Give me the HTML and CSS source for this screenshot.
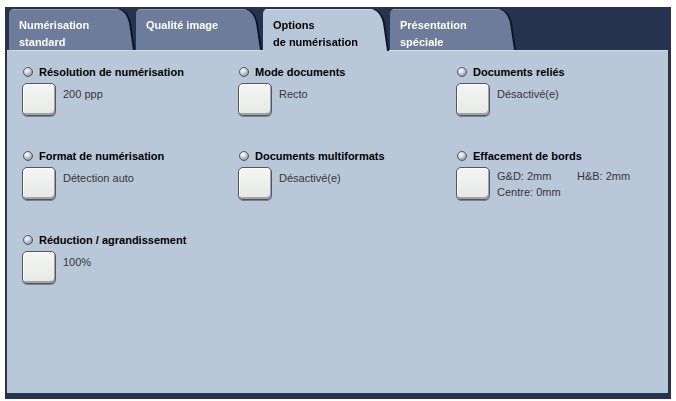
FILE: index.html
```html
<!DOCTYPE html>
<html lang="fr">
<head>
<meta charset="utf-8">
<title>Options de numérisation</title>
<link rel="stylesheet" href="styles.css">
</head>
<body>
<div class="frame">
  <div class="tabs">
    <div class="tab-wrap"><div class="tab">Numérisation<br>standard</div></div>
    <div class="tab-wrap"><div class="tab">Qualité image</div></div>
    <div class="tab-wrap active"><div class="tab">Options<br>de numérisation</div></div>
    <div class="tab-wrap"><div class="tab">Présentation<br>spéciale</div></div>
  </div>
  <div class="panel">
    <div class="grid">
      <div class="item">
        <div class="title"><span class="dot"></span>Résolution de numérisation</div>
        <div class="body"><div class="btn"></div><div class="label">200 ppp</div></div>
      </div>
      <div class="item">
        <div class="title"><span class="dot"></span>Mode documents</div>
        <div class="body"><div class="btn"></div><div class="label">Recto</div></div>
      </div>
      <div class="item">
        <div class="title"><span class="dot"></span>Documents reliés</div>
        <div class="body"><div class="btn"></div><div class="label">Désactivé(e)</div></div>
      </div>
      <div class="item">
        <div class="title"><span class="dot"></span>Format de numérisation</div>
        <div class="body"><div class="btn"></div><div class="label">Détection auto</div></div>
      </div>
      <div class="item">
        <div class="title"><span class="dot"></span>Documents multiformats</div>
        <div class="body"><div class="btn"></div><div class="label">Désactivé(e)</div></div>
      </div>
      <div class="item">
        <div class="title"><span class="dot"></span>Effacement de bords</div>
        <div class="body"><div class="btn"></div>
          <div class="label edges"><span>G&amp;D: 2mm</span><span>H&amp;B: 2mm</span><span>Centre: 0mm</span></div>
        </div>
      </div>
      <div class="item">
        <div class="title"><span class="dot"></span>Réduction / agrandissement</div>
        <div class="body"><div class="btn"></div><div class="label">100%</div></div>
      </div>
    </div>
  </div>
</div>
</body>
</html>
```
FILE: styles.css
```css
html, body {
  margin: 0;
  padding: 0;
  background: #ffffff;
}
body {
  font-family: "Liberation Sans", Arial, sans-serif;
}
.frame {
  margin: 7px 0 0 5px;
  width: 666px;
  height: 392px;
  box-sizing: border-box;
  padding: 2px 3px 6px 2px;
  background: #26334f;
  display: flex;
  flex-direction: column;
}
.tabs {
  display: flex;
  height: 41px;
  padding-left: 2px;
}
.tab-wrap {
  width: 127px;
  height: 41px;
  filter: drop-shadow(2px 0 0 #0e1526);
}
.tab {
  width: 127px;
  height: 41px;
  box-sizing: border-box;
  padding: 8px 0 0 10px;
  background: #6d7c9a;
  box-shadow: inset 0 1px 0 #8d9ab4;
  color: #ffffff;
  font-weight: bold;
  font-size: 11px;
  line-height: 17px;
  clip-path: path('M0 41 V5 Q0 0 5 0 H106 C114 0 118 6 120 14 L124 41 Z');
}
.tab-wrap.active {
  position: relative;
  z-index: 1;
  height: 42px;
}
.tab-wrap.active .tab {
  height: 42px;
  background: #b9c8d9;
  box-shadow: inset 0 1px 0 #d6e0ea;
  color: #000000;
  clip-path: path('M0 42 V5 Q0 0 5 0 H106 C114 0 118 6 120 14 L124 42 Z');
}
.panel {
  flex: 1;
  background: #b9c8d9;
  border-top: 1px solid #d2dde8;
  box-sizing: border-box;
  padding: 13px 0 0 15px;
}
.grid {
  display: grid;
  grid-template-columns: 216px 218px 217px;
  grid-auto-rows: 84px;
}
.title {
  display: flex;
  align-items: center;
  height: 16px;
  font-size: 11px;
  font-weight: bold;
  color: #000000;
  white-space: nowrap;
}
.dot {
  width: 8px;
  height: 8px;
  margin: 0 6px 0 1px;
  border-radius: 50%;
  border: 1px solid #4f5663;
  background: radial-gradient(circle at 35% 30%, #ffffff 0%, #d5dbe2 35%, #8b95a3 80%, #6c7582 100%);
}
.body {
  display: flex;
  gap: 7px;
  margin-top: 3px;
}
.btn {
  width: 34px;
  height: 33px;
  flex: none;
  box-sizing: border-box;
  border: 1px solid #50565e;
  border-radius: 5px;
  background: linear-gradient(#f5f6f4, #e6e8e6);
  box-shadow: inset 1px 1px 0 #ffffff, inset -1px -2px 0 #9fa4a9, 0 1px 0 #7c8288;
}
.label {
  padding-top: 3px;
  font-size: 11px;
  line-height: 16px;
  color: #363636;
  white-space: nowrap;
}
.edges {
  display: grid;
  grid-template-columns: 80px auto;
  padding-top: 1px;
}
```
